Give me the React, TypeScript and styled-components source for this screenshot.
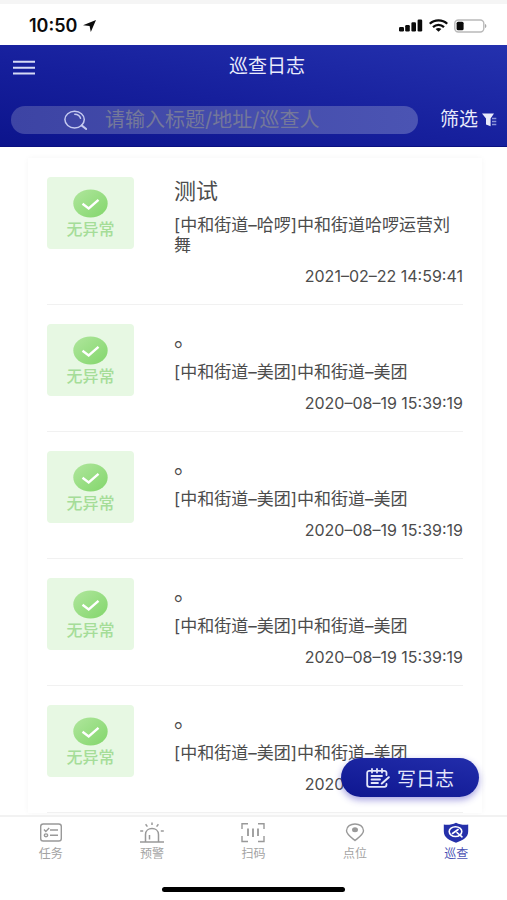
import React from "react";
import styled, { createGlobalStyle } from "styled-components";

const GlobalStyle = createGlobalStyle`
  * { box-sizing: border-box; }
  html, body { margin: 0; padding: 0; }
  body, button, input {
    font-family: Inter, "Noto Sans CJK SC", sans-serif;
  }
  button { border: 0; padding: 0; background: none; cursor: pointer; }
  h1, h2, p { margin: 0; font-weight: 400; }
  svg { display: block; flex: none; }
`;

const Screen = styled.div`
  display: flex;
  flex-direction: column;
  height: 100vh;
  overflow: hidden;
  background: #fff;
`;

const StatusBar = styled.div`
  display: flex;
  align-items: center;
  justify-content: space-between;
  flex: none;
  height: 45px;
  padding: 2px 20px 0 29px;
  border-top: 4px solid #f5f5f5;
  color: #0b0b0b;
`;

const StatusGroup = styled.div`
  display: flex;
  align-items: center;
  gap: 6px;
`;

const Clock = styled.span`
  font-size: 18px;
  line-height: 20px;
  font-weight: 600;
`;

const Header = styled.header`
  flex: none;
  padding: 0 10px 12px 11px;
  background: linear-gradient(10deg, #0c148c 0%, #161f9c 45%, #2431ae 100%);
  border-bottom: 1px solid #0a1080;
  color: #e9ebfb;
`;

const TitleRow = styled.div`
  display: grid;
  grid-template-columns: 64px 1fr 38px;
  align-items: center;
  height: 44px;
`;

const MenuButton = styled.button`
  justify-self: start;
  padding: 2px;
  color: #d6daf5;
`;

const PageTitle = styled.h1`
  font-size: 19px;
  line-height: 24px;
  text-align: center;
`;

const SearchRow = styled.div`
  display: flex;
  align-items: center;
  gap: 22px;
  margin-top: 17px;
`;

const SearchBox = styled.label`
  display: flex;
  align-items: center;
  flex: 1;
  min-width: 0;
  height: 28px;
  padding-left: 53px;
  gap: 18px;
  border-radius: 14px;
  background: linear-gradient(90deg, #3d44a4, #4b54b3);
  color: #c5caf0;
`;

const SearchInput = styled.input`
  flex: 1;
  min-width: 0;
  height: 28px;
  padding: 0;
  border: 0;
  outline: 0;
  background: transparent;
  color: #fff;
  font-size: 20px;
  &::placeholder { color: #74789a; opacity: 1; }
`;

const FilterButton = styled.button`
  display: flex;
  align-items: center;
  gap: 4px;
  color: #e9ebfb;
  font-size: 19px;
  line-height: 24px;
`;

const Main = styled.main`
  position: relative;
  flex: 1;
  min-height: 0;
`;

const Scroller = styled.div`
  height: 100%;
  padding: 11px 25px 0 28px;
  overflow-y: auto;
  scrollbar-width: none;
  &::-webkit-scrollbar { display: none; }
`;

const Card = styled.ul`
  margin: 0;
  padding: 0 19px;
  list-style: none;
  background: #fff;
  box-shadow: 0 0 6px rgba(0, 0, 0, 0.04);
`;

const LogItem = styled.li`
  display: flex;
  align-items: flex-start;
  gap: 40px;
  padding: 19px 0 18px;
  border-bottom: 1px solid #f1f1f1;
`;

const StatusTile = styled.div`
  display: flex;
  flex-direction: column;
  align-items: center;
  flex: none;
  width: 87px;
  height: 72px;
  padding-top: 12px;
  gap: 1px;
  border-radius: 4px;
  background: #e7f8e3;
  color: #a5dd98;
  font-size: 16px;
  line-height: 20px;
  font-weight: 500;
`;

const LogText = styled.div`
  flex: 1;
  min-width: 0;
  color: #4c4c4c;
`;

const LogTitle = styled.h2`
  font-size: 22px;
  line-height: 28px;
`;

const LogPlace = styled.p`
  margin: 10px 0 11px;
  font-size: 17px;
  line-height: 20px;
`;

const LogTime = styled.time`
  display: block;
  font-size: 16px;
  line-height: 20px;
  text-align: right;
  white-space: nowrap;
`;

const WriteButton = styled.button`
  position: absolute;
  right: 28px;
  bottom: 18px;
  display: flex;
  align-items: center;
  justify-content: center;
  gap: 7px;
  width: 138px;
  height: 39px;
  border-radius: 20px;
  background: linear-gradient(10deg, #0e1690, #222dab);
  box-shadow: 0 3px 7px rgba(60, 50, 190, 0.45);
  color: #e4e7fb;
  font-size: 19px;
`;

const TabBar = styled.nav`
  display: grid;
  grid-template-columns: repeat(5, 1fr);
  flex: none;
  border-top: 2px solid #f2f2f2;
  padding-top: 5px;
`;

const Tab = styled.a<{ $active?: boolean }>`
  display: flex;
  flex-direction: column;
  align-items: center;
  gap: 2px;
  color: ${(p) => (p.$active ? "#4a52b4" : "#a3a3a3")};
  font-size: 12px;
  line-height: 16px;
  text-decoration: none;
`;

const HomeArea = styled.div`
  display: flex;
  justify-content: center;
  flex: none;
  padding: 25px 0 8px;
`;

const HomeBar = styled.div`
  width: 36%;
  height: 5px;
  border-radius: 3px;
  background: #000;
`;

const LocationIcon = () => (
  <svg width="13" height="12" viewBox="0 0 13 12" aria-hidden="true">
    <path d="M13 0 7.8 12 6.6 6.1 0 5.2Z" fill="currentColor" />
  </svg>
);

const SignalIcon = () => (
  <svg width="24" height="13" viewBox="0 0 24 13" fill="currentColor" aria-hidden="true">
    <rect x="0" y="8" width="5" height="4.5" rx="1.2" />
    <rect x="6.2" y="6" width="4.6" height="6.5" rx="1.2" />
    <rect x="12.4" y="3.2" width="4.6" height="9.3" rx="1.2" />
    <rect x="18.6" y="0.5" width="4.6" height="12" rx="1.2" />
  </svg>
);

const WifiIcon = () => (
  <svg width="19" height="13" viewBox="0 0 19 13" aria-hidden="true">
    <g fill="none" stroke="currentColor" strokeWidth="2.3">
      <path d="M.8 4.8C5.5.2 13.5.2 18.2 4.8" />
      <path d="M4 8.1c3.2-3 7.8-3 11 0" />
    </g>
    <path d="M6.6 10c1.7-1.4 4.1-1.4 5.8 0L9.5 12.8Z" fill="currentColor" />
  </svg>
);

const BatteryIcon = () => (
  <svg width="33" height="14" viewBox="0 0 33 14" aria-hidden="true">
    <rect x=".8" y="1" width="29" height="12" rx="3.5" fill="none" stroke="#b9b9b9" strokeWidth="1.4" />
    <path d="M31 5c1.8.5 1.8 3.5 0 4Z" fill="#a8a8a8" />
    <rect x="2.6" y="2.8" width="7" height="8.4" rx="1.5" fill="currentColor" />
  </svg>
);

const MenuIcon = () => (
  <svg width="22" height="15" viewBox="0 0 22 15" stroke="currentColor" strokeWidth="2" aria-hidden="true">
    <path d="M0 1.8h22M0 7.8h22M0 13.5h22" />
  </svg>
);

const SearchIcon = () => (
  <svg width="23" height="20" viewBox="0 0 23 20" fill="none" stroke="currentColor" strokeWidth="1.5" strokeLinecap="round" aria-hidden="true">
    <ellipse cx="10.6" cy="9.6" rx="9.7" ry="8.3" />
    <path d="M10.8 4.3c3.2.1 5 1.7 5.7 4" />
    <path d="m17.6 15.4 4.6 3.6" strokeWidth="2" />
  </svg>
);

const FilterIcon = () => (
  <svg width="15" height="14" viewBox="0 0 15 14" aria-hidden="true">
    <path d="M0 .5h12L8.600 5.500V13.200L4 11.500V5.500Z" fill="currentColor" />
    <path d="M10 5.500h4.300M10 8.500h4.300M10 11.500h4.300" stroke="#8d95d8" strokeWidth="1.400" />
  </svg>
);

const CheckBadge = ({ id }: { id: string }) => (
  <svg width="35" height="29" viewBox="0 0 35 29" aria-hidden="true">
    <defs>
      <linearGradient id={id} x1="0" y1="0" x2="1" y2="1">
        <stop offset="0" stopColor="#b0e69d" />
        <stop offset="1" stopColor="#82d66b" />
      </linearGradient>
    </defs>
    <ellipse cx="17.5" cy="14.5" rx="17.2" ry="14" fill={`url(#${id})`} />
    <path d="m9.5 14.8 6.2 4.6 9.8-8.6" fill="none" stroke="#fff" strokeWidth="2.4" />
  </svg>
);

const WriteIcon = () => (
  <svg width="24" height="20" viewBox="0 0 24 20" fill="none" stroke="currentColor" strokeWidth="1.8" strokeLinecap="round" strokeLinejoin="round" aria-hidden="true">
    <path d="M20.5 7V4.8a2 2 0 0 0-2-2H3.2a2 2 0 0 0-2 2v12a2 2 0 0 0 2 2h15.300a2 2 0 0 0 2-2v-.8" />
    <path d="M6 .9v3.600M11 .9v3.600M16 .9v3.600M5.500 8h10.500M5.500 11.500h8.500M5.500 15h6.500" />
    <path d="m22.800 9.200-7 6.300" strokeWidth="2" />
  </svg>
);

const TaskIcon = () => (
  <svg width="24" height="22" viewBox="0 0 24 22" fill="none" stroke="#999" strokeWidth="1.4" aria-hidden="true">
    <rect x="1.700" y="2" width="20.600" height="17" rx="2.600" />
    <path d="m5 7.600 1.800 1.800L10.200 6M11 8h8M11 13.300h8" />
    <ellipse cx="7" cy="13.300" rx="1.700" ry="1.400" />
  </svg>
);

const AlarmIcon = () => (
  <svg width="26" height="22" viewBox="0 0 26 22" fill="none" stroke="#999" strokeWidth="1.500" aria-hidden="true">
    <path d="M1 20h24M6.500 20v-7.500c0-8 13-8 13 0V20M10.500 13v4.500" />
    <path d="M13 .500v2.600M6.600 2.300l1.800 2.300M19.400 2.300l-1.800 2.300M1.200 9h3M21.800 9h3" />
  </svg>
);

const ScanIcon = () => (
  <svg width="24" height="22" viewBox="0 0 24 22" fill="none" stroke="#999" strokeWidth="1.400" aria-hidden="true">
    <path d="M1 7V1.700h6M17 1.700h6V7M1 14v5.500h6M17 19.500h6V14" />
    <path d="M7 6.500v7.500M12 6.500v8.500M17 6.500v7.500" strokeWidth="1.800" />
  </svg>
);

const PlaceIcon = () => (
  <svg width="20" height="22" viewBox="0 0 20 22" aria-hidden="true">
    <path d="M10 18.500C7 16 1.500 12.500 1.500 8.800c0-9.100 17-9.100 17 0 0 3.700-5.500 7.200-8.500 9.700Z" fill="none" stroke="#999" strokeWidth="1.400" />
    <ellipse cx="10" cy="7.800" rx="3" ry="2.500" fill="#999" />
  </svg>
);

const PatrolIcon = () => (
  <svg width="26" height="22" viewBox="0 0 26 22" aria-hidden="true">
    <path d="M.8 2.600C5.500 3.300 9.300 2.400 13 .700c3.700 1.700 7.500 2.600 12.200 1.900v6.700c0 6.300-5.500 9.200-12.200 11.400C6.300 18.500.800 15.600.800 9.300Z" fill="#2530aa" />
    <g fill="none" stroke="#fff" strokeWidth="1.600" strokeLinecap="round">
      <ellipse cx="12.500" cy="9.600" rx="6.300" ry="4.900" />
      <path d="m9.500 11.500 5.600-4M14 10.600l5 4.200" />
    </g>
  </svg>
);

interface Log {
  title: string;
  place: string;
  time: string;
}

const meituan: Log = {
  title: "。",
  place: "[中和街道–美团]中和街道–美团",
  time: "2020–08–19 15:39:19",
};

const logs: Log[] = [
  {
    title: "测试",
    place: "[中和街道–哈啰]中和街道哈啰运营刘舞",
    time: "2021–02–22 14:59:41",
  },
  meituan,
  meituan,
  meituan,
  meituan,
];

const tabs = [
  { label: "任务", Icon: TaskIcon },
  { label: "预警", Icon: AlarmIcon },
  { label: "扫码", Icon: ScanIcon },
  { label: "点位", Icon: PlaceIcon },
  { label: "巡查", Icon: PatrolIcon, active: true },
];

export default function App() {
  return (
    <Screen lang="zh-CN">
      <GlobalStyle />
      <StatusBar>
        <StatusGroup>
          <Clock>10:50</Clock>
          <LocationIcon />
        </StatusGroup>
        <StatusGroup>
          <SignalIcon />
          <WifiIcon />
          <BatteryIcon />
        </StatusGroup>
      </StatusBar>
      <Header>
        <TitleRow>
          <MenuButton type="button" aria-label="菜单">
            <MenuIcon />
          </MenuButton>
          <PageTitle>巡查日志</PageTitle>
        </TitleRow>
        <SearchRow>
          <SearchBox>
            <SearchIcon />
            <SearchInput type="text" aria-label="搜索" placeholder="请输入标题/地址/巡查人" />
          </SearchBox>
          <FilterButton type="button">
            筛选
            <FilterIcon />
          </FilterButton>
        </SearchRow>
      </Header>
      <Main>
        <Scroller>
          <Card>
            {logs.map((log, i) => (
              <LogItem key={i}>
                <StatusTile>
                  <CheckBadge id={`badge-${i}`} />
                  无异常
                </StatusTile>
                <LogText>
                  <LogTitle>{log.title}</LogTitle>
                  <LogPlace>{log.place}</LogPlace>
                  <LogTime>{log.time}</LogTime>
                </LogText>
              </LogItem>
            ))}
          </Card>
        </Scroller>
        <WriteButton type="button">
          <WriteIcon />
          写日志
        </WriteButton>
      </Main>
      <TabBar>
        {tabs.map(({ label, Icon, active }) => (
          <Tab key={label} href="#" $active={active} aria-current={active ? "page" : undefined}>
            <Icon />
            {label}
          </Tab>
        ))}
      </TabBar>
      <HomeArea>
        <HomeBar />
      </HomeArea>
    </Screen>
  );
}
